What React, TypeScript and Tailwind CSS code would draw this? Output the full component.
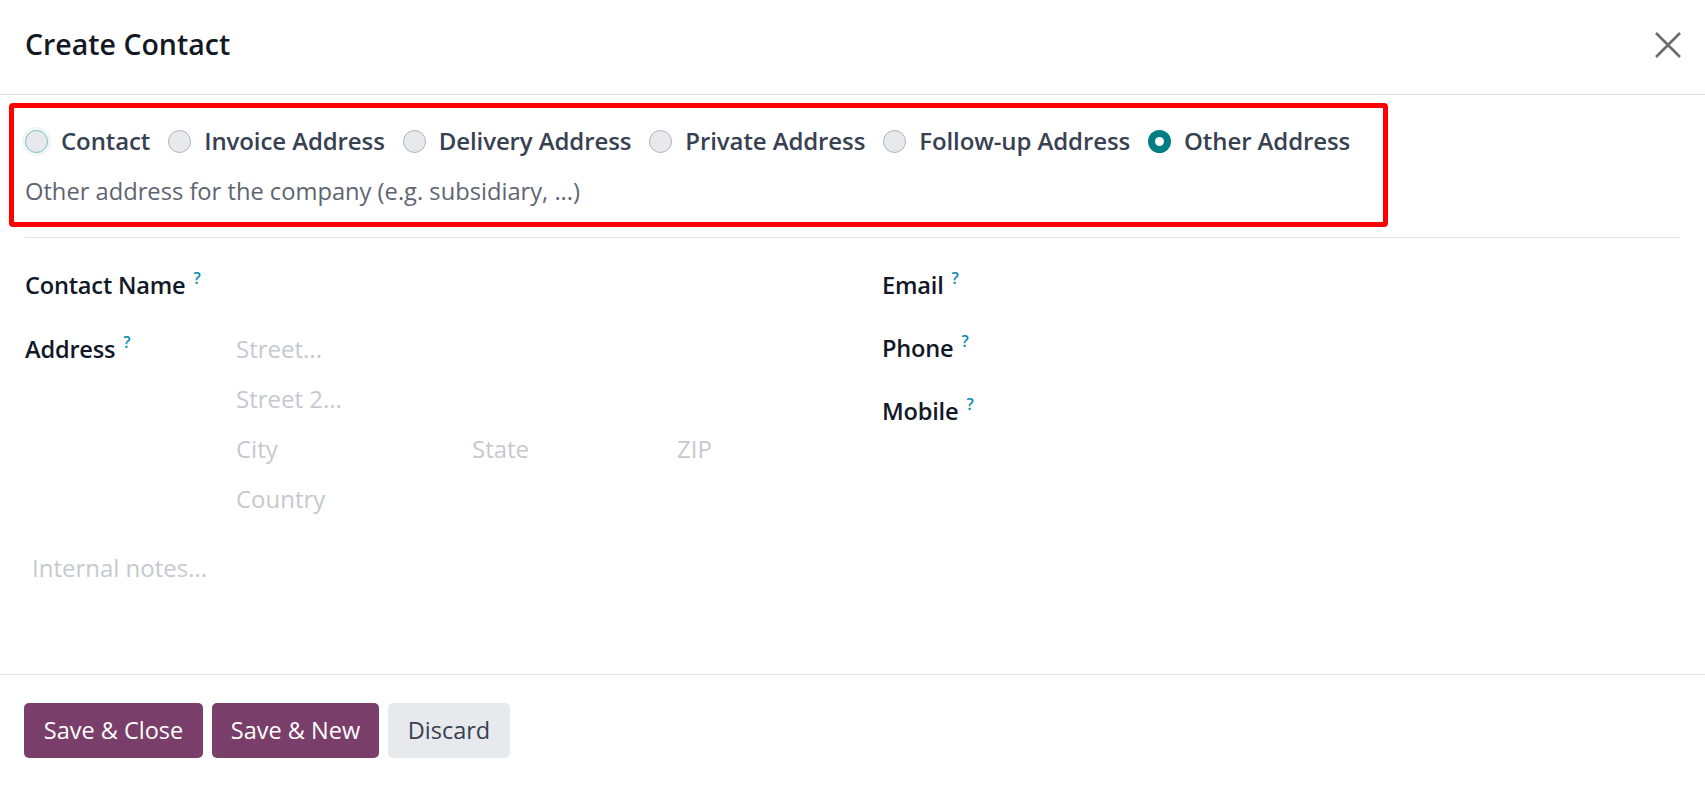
const font = { fontFamily: '"Open Sans", "Noto Sans", sans-serif' };

const types = [
  { id: "contact", label: "Contact" },
  { id: "invoice", label: "Invoice Address" },
  { id: "delivery", label: "Delivery Address" },
  { id: "private", label: "Private Address" },
  { id: "followup", label: "Follow-up Address" },
  { id: "other", label: "Other Address" },
];

function Radio({ checked, focused }: { checked?: boolean; focused?: boolean }) {
  if (checked) {
    return (
      <span className="flex h-[23px] w-[23px] shrink-0 items-center justify-center rounded-full bg-[#017e84]">
        <span className="h-[9px] w-[9px] rounded-full bg-white" />
      </span>
    );
  }
  return (
    <span
      className={`h-[23px] w-[23px] shrink-0 rounded-full border bg-[#e7e9ed] ${
        focused ? "border-[#7fbfc2] shadow-[0_0_0_3px_#eef6f6]" : "border-[#aeb3ba]"
      }`}
    />
  );
}

function Help() {
  return <sup className="ml-[8px] -top-[10px] text-[16px] font-semibold text-[#0d8bb0]">?</sup>;
}

function Label({ children }: { children: string }) {
  return (
    <span className="text-[23.6px] font-semibold leading-[30px] tracking-[-0.2px] text-[#111827]">
      {children}
      <Help />
    </span>
  );
}

function Placeholder({ children }: { children: string }) {
  return <span className="text-[24px] leading-[32px] text-[#c5c9cf]">{children}</span>;
}

export default function App() {
  return (
    <div className="relative flex h-[785px] w-full flex-col bg-white" style={font}>
      <header className="flex h-[95px] shrink-0 items-center justify-between border-b border-[#dee2e6] px-[25px] pb-[5px]">
        <h1 className="text-[28.5px] font-semibold text-[#141824]">Create Contact</h1>
        <button type="button" className="mr-[-2px] text-[#6b6b6b]">
          <svg width="28" height="28" viewBox="0 0 28 28" fill="none" stroke="currentColor" strokeWidth="2.6">
            <path d="M2 2 L26 26 M26 2 L2 26" />
          </svg>
        </button>
      </header>

      <main className="flex-1 px-[25px]">
        <div className="mt-[31px] flex h-[30px] items-center">
          {types.map((t, i) => (
            <label key={t.id} className="mr-[18px] flex items-center gap-[13px]">
              <Radio checked={t.id === "other"} focused={i === 0} />
              <span className="text-[24px] font-semibold tracking-[-0.1px] text-[#374151]">{t.label}</span>
            </label>
          ))}
        </div>
        <p className="mt-5 text-[23.7px] leading-[30px] text-[#5f6470]">
          Other address for the company (e.g. subsidiary, ...)
        </p>
        <div className="mt-[31px] border-t border-[#dee2e6]" />

        <div className="mt-[32px] grid grid-cols-[857px_1fr]">
          <div>
            <div className="h-[64px]">
              <Label>Contact Name</Label>
            </div>
            <div className="flex">
              <div className="w-[211px] shrink-0">
                <Label>Address</Label>
              </div>
              <div className="-mt-[1px] flex flex-col gap-[18px]">
                <Placeholder>Street...</Placeholder>
                <Placeholder>Street 2...</Placeholder>
                <div className="flex">
                  <div className="w-[236px]">
                    <Placeholder>City</Placeholder>
                  </div>
                  <div className="w-[205px]">
                    <Placeholder>State</Placeholder>
                  </div>
                  <Placeholder>ZIP</Placeholder>
                </div>
                <Placeholder>Country</Placeholder>
              </div>
            </div>
            <div className="mt-[37px] pl-[7px]">
              <Placeholder>Internal notes...</Placeholder>
            </div>
          </div>
          <div className="flex flex-col gap-[33px]">
            <Label>Email</Label>
            <Label>Phone</Label>
            <Label>Mobile</Label>
          </div>
        </div>
      </main>

      <footer className="flex shrink-0 gap-[9px] border-t border-[#dee2e6] px-[24px] pt-[28px] pb-[27px]">
        <button type="button" className="h-[55px] w-[179px] rounded-[5px] bg-[#793e69] text-[23.5px] font-medium text-white">
          Save &amp; Close
        </button>
        <button type="button" className="h-[55px] w-[167px] rounded-[5px] bg-[#793e69] text-[23.5px] font-medium text-white">
          Save &amp; New
        </button>
        <button type="button" className="h-[55px] w-[122px] rounded-[5px] bg-[#e7e9ed] text-[23.5px] font-medium text-[#374151]">
          Discard
        </button>
      </footer>

      <div className="pointer-events-none absolute left-[9px] top-[103px] h-[124px] w-[1379px] rounded-[4px] border-[5px] border-[#ff0000]" />
    </div>
  );
}
